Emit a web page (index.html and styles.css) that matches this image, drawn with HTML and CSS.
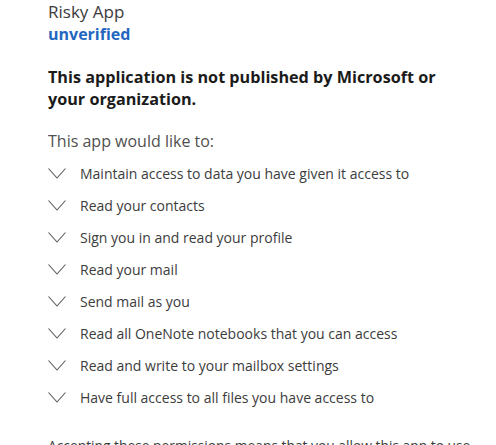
FILE: index.html
```html
<!DOCTYPE html>
<html lang="en">
<head>
<meta charset="utf-8">
<link rel="stylesheet" href="styles.css">
</head>
<body>
<div class="page">
  <div class="app">
    <div class="app-name">Risky App</div>
    <div class="app-status">unverified</div>
  </div>
  <div class="warning">This application is not published by Microsoft or your organization.</div>
  <div class="intro">This app would like to:</div>
  <ul class="perms">
    <li class="perm"><svg class="chev" viewBox="0 0 18 11"><path d="M0.5 0.5 L9 10 L17.5 0.5"/></svg><span>Maintain access to data you have given it access to</span></li>
    <li class="perm"><svg class="chev" viewBox="0 0 18 11"><path d="M0.5 0.5 L9 10 L17.5 0.5"/></svg><span>Read your contacts</span></li>
    <li class="perm"><svg class="chev" viewBox="0 0 18 11"><path d="M0.5 0.5 L9 10 L17.5 0.5"/></svg><span>Sign you in and read your profile</span></li>
    <li class="perm"><svg class="chev" viewBox="0 0 18 11"><path d="M0.5 0.5 L9 10 L17.5 0.5"/></svg><span>Read your mail</span></li>
    <li class="perm"><svg class="chev" viewBox="0 0 18 11"><path d="M0.5 0.5 L9 10 L17.5 0.5"/></svg><span>Send mail as you</span></li>
    <li class="perm"><svg class="chev" viewBox="0 0 18 11"><path d="M0.5 0.5 L9 10 L17.5 0.5"/></svg><span>Read all OneNote notebooks that you can access</span></li>
    <li class="perm"><svg class="chev" viewBox="0 0 18 11"><path d="M0.5 0.5 L9 10 L17.5 0.5"/></svg><span>Read and write to your mailbox settings</span></li>
    <li class="perm"><svg class="chev" viewBox="0 0 18 11"><path d="M0.5 0.5 L9 10 L17.5 0.5"/></svg><span>Have full access to all files you have access to</span></li>
  </ul>
  <p class="note">Accepting these permissions means that you allow this app to use your data as specified in their terms of service and privacy statement.</p>
</div>
</body>
</html>
```
FILE: styles.css
```css
html, body {
  margin: 0;
  padding: 0;
  background: #ffffff;
}
body {
  font-family: "Open Sans", "Noto Sans", "Liberation Sans", sans-serif;
  color: #1b1b1b;
}
.page {
  padding: 0 24px 0 48px;
}
.app {
  padding-top: 1px;
}
.app-name {
  font-size: 17px;
  line-height: 22px;
  color: #3b3b3b;
}
.app-status {
  font-size: 16px;
  line-height: 22px;
  font-weight: 700;
  color: #2467c0;
}
.warning {
  margin-top: 21px;
  padding-right: 16px;
  font-size: 16.2px;
  line-height: 22px;
  font-weight: 700;
  color: #1b1b1b;
}
.intro {
  margin-top: 20px;
  font-size: 16px;
  line-height: 22px;
  color: #505050;
}
.perms {
  list-style: none;
  margin: 5px 0 0 0;
  padding: 0;
}
.perm {
  display: flex;
  align-items: center;
  gap: 14px;
  height: 32px;
  font-size: 14px;
  color: #3c3c3c;
}
.chev {
  width: 18px;
  height: 11px;
  flex: none;
  fill: none;
  stroke: #5a5a5a;
  stroke-width: 1.1;
}
.note {
  margin: 23px 0 0 0;
  font-size: 13.8px;
  line-height: 20px;
  color: #3c3c3c;
}
```
